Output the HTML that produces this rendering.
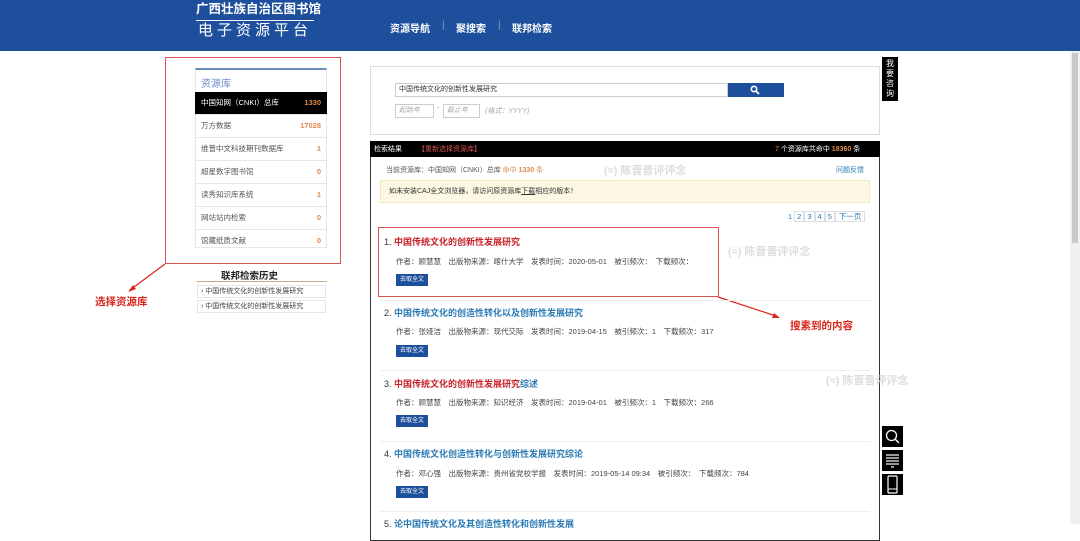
<!DOCTYPE html>
<html><head><meta charset="utf-8"><style>
*{margin:0;padding:0;box-sizing:border-box}
body{width:1080px;height:524px;overflow:hidden;background:#fff;font-family:"Liberation Sans","Noto Sans CJK SC",sans-serif;font-size:8px;color:#333;position:relative}
.a{position:absolute;white-space:nowrap}
.hdr{left:0;top:0;width:1080px;height:51px;background:#1d4f9d}
.nav{color:#fff;font-size:10px;font-weight:bold;top:20px}
.row{position:absolute;left:195px;width:132px;height:23px;border-bottom:1px solid #e6e6e6;padding:0 6px;line-height:22px;font-size:7.5px;color:#555}
.row b{float:right;color:#e08a4a;font-weight:bold}
.t{position:absolute;left:384px;font-size:9px;font-weight:bold;color:#c8232c}
.t2{color:#2b7bb5}
.m{position:absolute;left:396px;font-size:7.5px;color:#444}
.btn{position:absolute;left:396px;width:32px;height:12px;background:#1d4f9d;color:#fff;font-size:6px;line-height:12px;text-align:center}
.sep{position:absolute;left:380px;width:490px;border-top:1px solid #eee}
.ic{position:absolute;left:882px;width:21px;height:21px;background:#000}
.wm{position:absolute;color:#ddd;font-size:11px;font-weight:bold}
</style></head><body>
<div class="a hdr"></div>
<div class="a" style="left:196px;top:0px;color:#fff;font-size:12.5px;font-weight:bold;line-height:18px">广西壮族自治区图书馆</div>
<div class="a" style="left:196px;top:20px;width:118px;border-top:1px solid #fff"></div>
<div class="a" style="left:198px;top:21px;color:#fff;font-size:15px;letter-spacing:4px;line-height:20px">电子资源平台</div>
<div class="a nav" style="left:390px">资源导航</div>
<div class="a nav" style="left:442px;font-weight:normal;color:#8aa">|</div>
<div class="a nav" style="left:456px">聚搜索</div>
<div class="a nav" style="left:498px;font-weight:normal;color:#8aa">|</div>
<div class="a nav" style="left:512px">联邦检索</div>
<div class="a" style="left:1070px;top:51px;width:10px;height:473px;background:#f0f0f0"></div>
<div class="a" style="left:1072px;top:53px;width:6px;height:190px;background:#c8c8c8"></div>

<div class="a" style="left:165px;top:57px;width:176px;height:207px;border:1px solid #d9534f"></div>
<div class="a" style="left:195px;top:68px;width:132px;height:180px;border:1px solid #e6e6e6;border-top:2px solid #6d8fc0"></div>
<div class="a" style="left:201px;top:75px;font-size:10px;color:#6a8ec7">资源库</div>
<div class="row" style="top:92px;background:#000;color:#fff">中国知网（CNKI）总库<b>1330</b></div>
<div class="row" style="top:115px">万方数据<b>17028</b></div>
<div class="row" style="top:138px">维普中文科技期刊数据库<b>1</b></div>
<div class="row" style="top:161px">超星数字图书馆<b>0</b></div>
<div class="row" style="top:184px">读秀知识库系统<b>1</b></div>
<div class="row" style="top:207px">网站站内检索<b>0</b></div>
<div class="row" style="top:230px;border:none">馆藏纸质文献<b>0</b></div>
<div class="a" style="left:221px;top:268px;font-size:9.5px;font-weight:bold;color:#222">联邦检索历史</div>
<div class="a" style="left:197px;top:281px;width:130px;border-top:1px solid #c9a98a"></div>
<div class="a" style="left:197px;top:285px;width:129px;height:13px;border:1px solid #e6e6e6;font-size:7px;line-height:11px;padding-left:3px;color:#444">› 中国传统文化的创新性发展研究</div>
<div class="a" style="left:197px;top:300px;width:129px;height:13px;border:1px solid #e6e6e6;font-size:7px;line-height:11px;padding-left:3px;color:#444">› 中国传统文化的创新性发展研究</div>
<div class="a" style="left:95px;top:294px;font-size:10.5px;font-weight:bold;color:#d9261c">选择资源库</div>
<svg class="a" style="left:0;top:0" width="1080" height="524"><line x1="165" y1="264" x2="130" y2="290" stroke="#d9261c" stroke-width="1.2"/><polygon points="128,292 133,285 136,289" fill="#d9261c"/>
<line x1="718" y1="297" x2="776" y2="316" stroke="#d9261c" stroke-width="1.2"/><polygon points="780,318 772,318 774,313" fill="#d9261c"/></svg>

<div class="a" style="left:370px;top:66px;width:510px;height:69px;border:1px solid #ddd"></div>
<div class="a" style="left:395px;top:83px;width:333px;height:14px;border:1px solid #ccc;font-size:7px;line-height:12px;padding-left:3px;color:#333">中国传统文化的创新性发展研究</div>
<div class="a" style="left:728px;top:83px;width:56px;height:14px;background:#1d4f9d"></div>
<svg class="a" style="left:750px;top:85px" width="10" height="10"><circle cx="4" cy="4" r="2.7" fill="none" stroke="#fff" stroke-width="1.6"/><line x1="6" y1="6" x2="9" y2="9" stroke="#fff" stroke-width="1.8"/></svg>
<div class="a" style="left:395px;top:104px;width:39px;height:14px;border:1px solid #ccc;font-size:7px;line-height:12px;padding-left:3px;color:#aaa;font-style:italic">起始年</div>
<div class="a" style="left:437px;top:105px;font-size:7px;color:#999">-</div>
<div class="a" style="left:443px;top:104px;width:37px;height:14px;border:1px solid #ccc;font-size:7px;line-height:12px;padding-left:3px;color:#aaa;font-style:italic">截止年</div>
<div class="a" style="left:485px;top:106px;font-size:7px;color:#aaa;font-style:italic">(格式：YYYY)</div>

<div class="a" style="left:370px;top:141px;width:510px;height:400px;border:1px solid #333"></div>
<div class="a" style="left:370px;top:141px;width:510px;height:16px;background:#000"></div>
<div class="a" style="left:374px;top:144px;color:#fff;font-size:7px">检索结果</div>
<div class="a" style="left:418px;top:144px;color:#d9534f;font-size:7px">【重新选择资源库】</div>
<div class="a" style="left:775px;top:144px;color:#fff;font-size:7px"><span style="color:#e08a4a">7</span> 个资源库共命中 <b style="color:#e08a4a">18360</b> 条</div>
<div class="a" style="left:386px;top:165px;font-size:7px;color:#555">当前资源库：中国知网（CNKI）总库 <span style="color:#e08a4a">命中 <b>1330</b> 条</span></div>
<div class="a" style="left:836px;top:165px;font-size:7px;color:#2b7bb5">问题反馈</div>
<div class="a" style="left:380px;top:180px;width:490px;height:23px;background:#fcf8e3;border:1px solid #f5e9c0;font-size:7px;line-height:21px;padding-left:8px;color:#333">如未安装CAJ全文浏览器，请访问原资源库<u>下载</u>相应的版本！</div>
<div class="a" style="left:786px;top:210px;font-size:7.5px;color:#2b7bb5;line-height:14px"><span style="padding:0 2px">1</span><span style="border:1px solid #ddd;padding:0 2px">2</span><span style="border:1px solid #ddd;padding:0 2px">3</span><span style="border:1px solid #ddd;padding:0 2px">4</span><span style="border:1px solid #ddd;padding:0 2px">5</span><span style="border:1px solid #ddd;padding:0 3px">下一页</span></div>
<div class="wm" style="left:604px;top:162px">(≈) 陈晋晋评评念</div>
<div class="wm" style="left:728px;top:243px">(≈) 陈晋晋评评念</div>
<div class="wm" style="left:826px;top:372px">(≈) 陈晋晋评评念</div>

<div class="a" style="left:378px;top:227px;width:341px;height:70px;border:1px solid #d9534f"></div>
<div class="t" style="top:235px"><span style="color:#333;font-weight:normal">1.</span> 中国传统文化的创新性发展研究</div>
<div class="m" style="top:256px">作者：顾慧慧　出版物来源：喀什大学　发表时间：2020-05-01　被引频次：　下载频次：</div>
<div class="btn" style="top:274px">去取全文</div>
<div class="sep" style="top:300px"></div>
<div class="t t2" style="top:306px"><span style="color:#333;font-weight:normal">2.</span> 中国传统文化的创造性转化以及创新性发展研究</div>
<div class="m" style="top:326px">作者：张娅洁　出版物来源：现代交际　发表时间：2019-04-15　被引频次：1　下载频次：317</div>
<div class="btn" style="top:345px">去取全文</div>
<div class="sep" style="top:370px"></div>
<div class="t" style="top:377px"><span style="color:#333;font-weight:normal">3.</span> 中国传统文化的创新性发展研究<span style="color:#2b7bb5">综述</span></div>
<div class="m" style="top:397px">作者：顾慧慧　出版物来源：知识经济　发表时间：2019-04-01　被引频次：1　下载频次：266</div>
<div class="btn" style="top:415px">去取全文</div>
<div class="sep" style="top:441px"></div>
<div class="t t2" style="top:447px"><span style="color:#333;font-weight:normal">4.</span> 中国传统文化创造性转化与创新性发展研究综论</div>
<div class="m" style="top:468px">作者：邓心强　出版物来源：贵州省党校学报　发表时间：2019-05-14 09:34　被引频次：　下载频次：784</div>
<div class="btn" style="top:486px">去取全文</div>
<div class="sep" style="top:511px"></div>
<div class="t t2" style="top:517px"><span style="color:#333;font-weight:normal">5.</span> 论中国传统文化及其创造性转化和创新性发展</div>
<div class="a" style="left:790px;top:318px;font-size:10.5px;font-weight:bold;color:#d9261c">搜素到的内容</div>

<div class="a" style="left:882px;top:57px;width:16px;height:44px;background:#000;color:#fff;font-size:8px;line-height:10px;text-align:center;padding-top:2px;white-space:normal">我<br>要<br>咨<br>询</div>
<div class="ic" style="top:426px"><svg width="21" height="21"><circle cx="9.5" cy="9.5" r="5" fill="none" stroke="#fff" stroke-width="1.3"/><line x1="13" y1="13" x2="17" y2="17" stroke="#fff" stroke-width="1.4"/></svg></div>
<div class="ic" style="top:450px"><svg width="21" height="21"><g stroke="#fff" stroke-width="1.2"><line x1="4" y1="5" x2="17" y2="5"/><line x1="4" y1="8" x2="17" y2="8"/><line x1="4" y1="11" x2="17" y2="11"/><line x1="4" y1="14" x2="17" y2="14"/><line x1="9" y1="17" x2="12" y2="17"/></g></svg></div>
<div class="ic" style="top:474px"><svg width="21" height="21"><rect x="6" y="2" width="9" height="17" rx="1" fill="none" stroke="#fff" stroke-width="1.2"/><line x1="6" y1="15" x2="15" y2="15" stroke="#fff"/></svg></div>
</body></html>
